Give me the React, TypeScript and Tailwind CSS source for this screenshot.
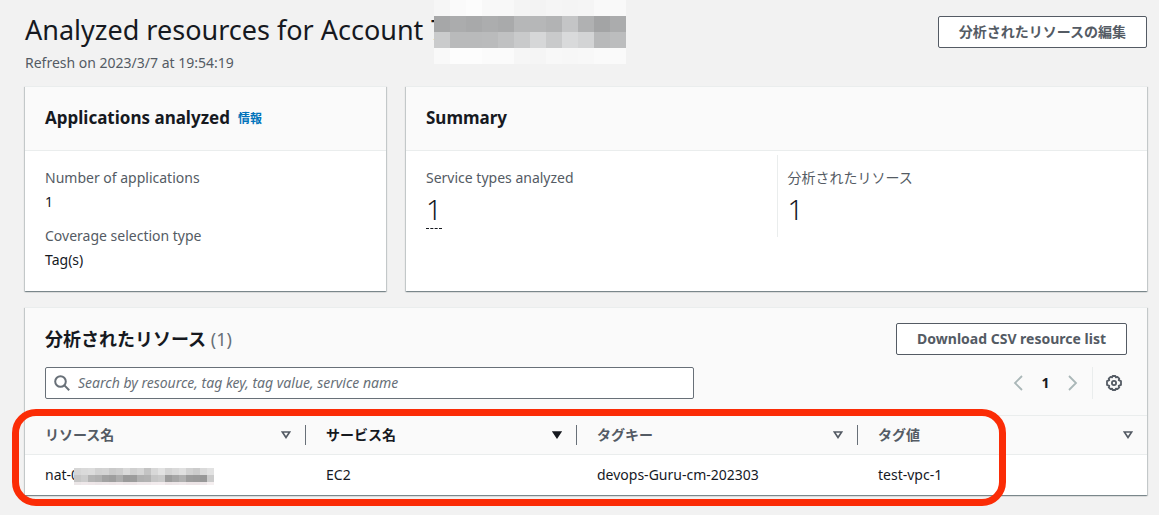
import React from "react"

const ACCOUNT_MOSAIC = [
  ["bg-[#f6f6f6]", "bg-[#fafafa]", "bg-[#fcfcfc]", "bg-[#f8f8f8]", "bg-[#f8f8f8]", "bg-[#f4f4f4]", "bg-[#f3f3f3]", "bg-[#f5f5f5]", "bg-[#f4f4f4]", "bg-[#f5f5f5]", "bg-[#f9f9f9]", "bg-[#f9f9f9]"],
  ["bg-[#a6a7a8]", "bg-[#abacad]", "bg-[#a8a9aa]", "bg-[#acadae]", "bg-[#a9aaab]", "bg-[#b6b7b8]", "bg-[#b6b7b8]", "bg-[#b2b3b4]", "bg-[#c4c5c6]", "bg-[#b0b1b2]", "bg-[#a3a4a5]", "bg-[#abacad]"],
  ["bg-[#cacbcc]", "bg-[#b9babb]", "bg-[#b9babb]", "bg-[#babbbc]", "bg-[#c0c1c2]", "bg-[#c9cacb]", "bg-[#d6d7d8]", "bg-[#c9cacb]", "bg-[#d9dadb]", "bg-[#d3d4d5]", "bg-[#b8b9ba]", "bg-[#bcbdbe]"],
  ["bg-[#f9f9f9]", "bg-[#fdfdfd]", "bg-[#fdfdfd]", "bg-[#fbfbfb]", "bg-[#fbfbfb]", "bg-[#f6f6f6]", "bg-[#f5f5f5]", "bg-[#f8f8f8]", "bg-[#f7f7f7]", "bg-[#f8f8f8]", "bg-[#fafafa]", "bg-[#fafafa]"],
]

const NAME_MOSAIC = [
  ["bg-[#d6d6d6]", "bg-[#dadada]", "bg-[#dcdcdc]", "bg-[#d2d2d2]", "bg-[#d4d4d4]", "bg-[#cacaca]", "bg-[#cecece]", "bg-[#dadada]", "bg-[#d0d0d0]", "bg-[#d6d6d6]", "bg-[#c4c4c4]", "bg-[#d8d8d8]", "bg-[#e2e2e2]", "bg-[#d4d4d4]", "bg-[#dadada]", "bg-[#e0e0e0]", "bg-[#d2d2d2]", "bg-[#cccccc]", "bg-[#dadada]", "bg-[#e2e2e2]"],
  ["bg-[#c6c6c6]", "bg-[#cccccc]", "bg-[#b4b4b4]", "bg-[#b0b0b0]", "bg-[#a2a2a2]", "bg-[#9e9e9e]", "bg-[#acacac]", "bg-[#9a9a9a]", "bg-[#9c9c9c]", "bg-[#b0b0b0]", "bg-[#b2b2b2]", "bg-[#c6c6c6]", "bg-[#cacaca]", "bg-[#9c9c9c]", "bg-[#a6a6a6]", "bg-[#b0b0b0]", "bg-[#9c9c9c]", "bg-[#9a9a9a]", "bg-[#989898]", "bg-[#cccccc]"],
]

const NAME_MOSAIC_EDGE = [
  ["bg-[#ebe6e7]", "bg-[#efe8ea]", "bg-[#eee6e8]", "bg-[#ebe4e6]", "bg-[#ede6e8]", "bg-[#ece4e6]", "bg-[#eee6e8]", "bg-[#ebe4e6]", "bg-[#ece4e6]", "bg-[#efe8ea]", "bg-[#efe8ea]", "bg-[#f2ebed]", "bg-[#f3ecee]", "bg-[#ece4e6]", "bg-[#ede6e8]", "bg-[#efe8ea]", "bg-[#ece4e6]", "bg-[#ece4e6]", "bg-[#ede6e8]", "bg-[#f5eff0]"],
]

const COLUMNS = [
  { label: "リソース名", active: false, width: "w-[281px]" },
  { label: "サービス名", active: true, width: "w-[271px]" },
  { label: "タグキー", active: false, width: "w-[281px]" },
  { label: "タグ値", active: false, width: "" },
]

function Mosaic({ rows, cell }: { rows: string[][]; cell: string }) {
  return (
    <span aria-hidden="true" className="block">
      {rows.map((row, r) => (
        <span key={r} className="flex">
          {row.map((color, i) => (
            <span key={i} className={`${cell} ${color}`} />
          ))}
        </span>
      ))}
    </span>
  )
}

function Card({ className = "", children }: { className?: string; children: React.ReactNode }) {
  return (
    <section
      className={`border-t border-[#eaeded] bg-white shadow-[0_1px_1px_0_rgba(0,28,36,0.3),1px_1px_1px_0_rgba(0,28,36,0.15),-1px_1px_1px_0_rgba(0,28,36,0.15)] ${className}`}
    >
      {children}
    </section>
  )
}

function CardHeader({ children }: { children: React.ReactNode }) {
  return <div className="flex h-16 items-center gap-2 border-b border-[#eaeded] bg-[#fafafa] px-5">{children}</div>
}

function ActionButton({ children }: { children: React.ReactNode }) {
  return (
    <button className="h-8 rounded-xs border border-[#545b64] bg-white px-5 text-sm font-bold text-[#545b64]">
      {children}
    </button>
  )
}

function SortIcon({ active }: { active: boolean }) {
  const color = active ? "#16191f" : "#545b64"
  return (
    <svg viewBox="0 0 10 8" className="h-2 w-[10px]" fill={active ? color : "none"} stroke={color} strokeWidth="1.7">
      <path d="M1.3 1h7.4L5 6.5z" />
    </svg>
  )
}

function SearchIcon() {
  return (
    <svg viewBox="0 0 16 16" className="size-4" fill="none" stroke="#687078" strokeWidth="2">
      <circle cx="6.5" cy="6.5" r="5.3" />
      <path d="m10.4 10.4 4.8 4.8" />
    </svg>
  )
}

function Chevron({ d }: { d: string }) {
  return (
    <svg viewBox="0 0 10 16" className="h-4 w-[10px]" fill="none" stroke="#aab7b8" strokeWidth="1.8">
      <path d={d} />
    </svg>
  )
}

function GearIcon() {
  return (
    <svg viewBox="0 0 16 16" className="size-4" fill="none" stroke="#545b64" strokeWidth="1.8">
      <path
        strokeLinejoin="round"
        d="M6.6 1h2.8l.5 1.4 1.5-.6 1.9 1.9-.6 1.5 2.3.9v3.8l-2.3.9.6 1.5-1.9 1.9-1.5-.6L9.4 15H6.6l-.5-1.4-1.5.6-1.9-1.9.6-1.5L1 9.9V6.1l2.3-.9-.6-1.5 1.9-1.9 1.5.6z"
      />
      <circle cx="8" cy="8" r="2.1" />
    </svg>
  )
}

export default function App() {
  return (
    <main className="min-h-screen bg-[#f2f2f2] pt-3 pr-3 pb-5 pl-[25px] font-['Noto_Sans','Noto_Sans_CJK_JP',sans-serif] text-sm text-[#16191f]">
      <header className="flex items-start justify-between">
        <div>
          <h1 className="relative flex h-9 items-center text-[27px] leading-9 whitespace-pre">
            Analyzed resources for Account 7
            <span className="absolute -top-3 left-full -ml-3">
              <Mosaic rows={ACCOUNT_MOSAIC} cell="h-4 w-4" />
            </span>
          </h1>
          <p className="h-[38px] text-sm leading-[30px] text-[#545b64]">Refresh on 2023/3/7 at 19:54:19</p>
        </div>
        <div className="pt-1">
          <ActionButton>分析されたリソースの編集</ActionButton>
        </div>
      </header>

      <div className="grid grid-cols-[361fr_741fr] gap-5">
        <Card>
          <CardHeader>
            <h2 className="text-[17px] font-bold">Applications analyzed</h2>
            <a href="#info" className="text-xs font-bold text-[#0073bb]">情報</a>
          </CardHeader>
          <dl className="px-5 pt-[15px] pb-[19px] leading-6">
            <dt className="text-[#545b64]">Number of applications</dt>
            <dd>1</dd>
            <dt className="mt-[10px] text-[#545b64]">Coverage selection type</dt>
            <dd>Tag(s)</dd>
          </dl>
        </Card>
        <Card>
          <CardHeader>
            <h2 className="text-[17px] font-bold">Summary</h2>
          </CardHeader>
          <dl className="grid grid-cols-2 px-5 pt-1">
            <div className="h-[82px] pt-[11px]">
              <dt className="leading-6 text-[#545b64]">Service types analyzed</dt>
              <dd className="text-[28px] leading-[38px] font-light">
                <span className="inline-block border-b border-dashed border-[#16191f]">1</span>
              </dd>
            </div>
            <div className="h-[82px] border-l border-[#eaeded] pt-[11px] pl-[10px]">
              <dt className="leading-6 text-[#545b64]">分析されたリソース</dt>
              <dd className="text-[28px] leading-[38px] font-light">1</dd>
            </div>
          </dl>
        </Card>
      </div>

      <Card className="mt-4">
        <div className="bg-[#fafafa] px-5 pt-[15px] pb-4">
          <div className="flex items-center justify-between">
            <h2 className="text-lg leading-8 font-bold">
              分析されたリソース <span className="font-normal text-[#687078]">(1)</span>
            </h2>
            <ActionButton>Download CSV resource list</ActionButton>
          </div>
          <div className="mt-3 flex items-center justify-between">
            <label className="flex h-8 w-3/5 items-center gap-2 rounded-xs border border-[#687078] bg-white px-2">
              <SearchIcon />
              <input
                type="search"
                aria-label="Search resources"
                placeholder="Search by resource, tag key, tag value, service name"
                className="min-w-0 flex-1 text-sm outline-none placeholder:text-[#687078] placeholder:italic"
              />
            </label>
            <nav aria-label="Pagination" className="flex h-8 items-center">
              <button aria-label="Previous page"><Chevron d="M9 1 2 8l7 7" /></button>
              <button className="w-[45px] text-center font-bold">1</button>
              <button aria-label="Next page"><Chevron d="m1 1 7 7-7 7" /></button>
              <button aria-label="Preferences" className="ml-[14px] h-8 border-l border-[#eaeded] pr-[5px] pl-[13px]">
                <GearIcon />
              </button>
            </nav>
          </div>
        </div>

        <div className="relative">
          <table className="w-full table-fixed text-left">
            <thead className="border-y border-[#eaeded] bg-[#fafafa]">
              <tr className="h-[39px]">
                {COLUMNS.map(({ label, active, width }, i) => (
                  <th key={label} className={`p-0 font-bold ${width} ${active ? "text-[#16191f]" : "text-[#545b64]"}`}>
                    <div className={`flex h-5 items-center justify-between pr-[14px] pl-5 ${i < COLUMNS.length - 1 ? "border-r border-[#687078]" : ""}`}>
                      <span>{label}</span>
                      <SortIcon active={active} />
                    </div>
                  </th>
                ))}
              </tr>
            </thead>
            <tbody>
              <tr className="h-10">
                <td className="pl-5">
                  <span className="relative">
                    nat-0
                    <span className="absolute top-[3px] left-full -ml-[5px]">
                      <Mosaic rows={NAME_MOSAIC} cell="h-[7px] w-[7px]" />
                      <Mosaic rows={NAME_MOSAIC_EDGE} cell="h-[3px] w-[7px]" />
                    </span>
                  </span>
                </td>
                <td className="pl-5">EC2</td>
                <td className="pl-5">devops-Guru-cm-202303</td>
                <td className="pl-5">test-vpc-1</td>
              </tr>
            </tbody>
          </table>
          <div className="pointer-events-none absolute -top-1.5 right-[141px] -bottom-[11px] -left-[13px] rounded-3xl border-[7px] border-[#fb2c06]" />
        </div>
      </Card>
    </main>
  )
}
